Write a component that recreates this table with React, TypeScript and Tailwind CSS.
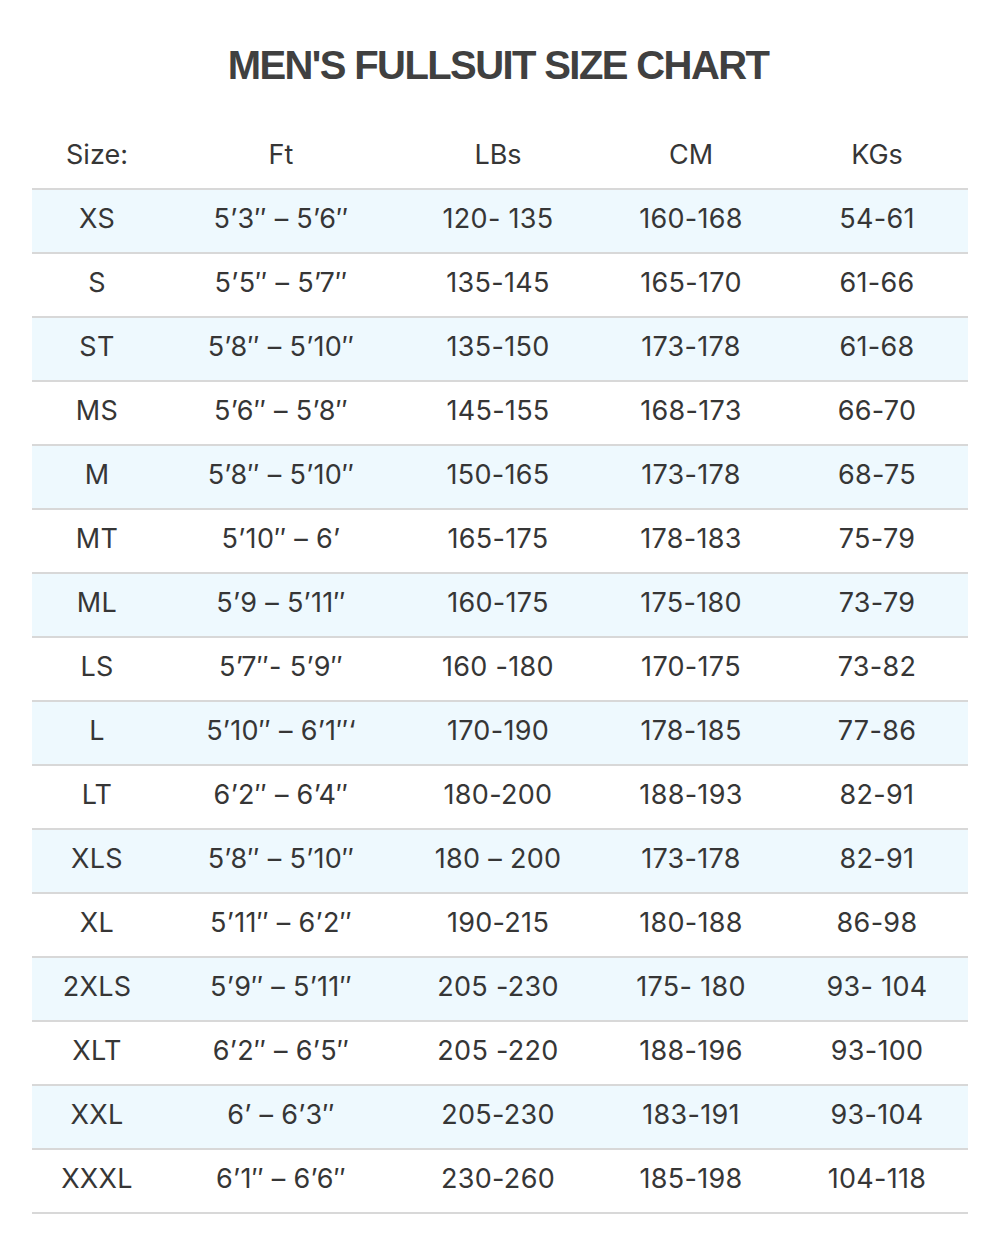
import React from "react";

type Row = [string, string, string, string, string];

const HEAD: Row = ["Size:", "Ft", "LBs", "CM", "KGs"];

const ROWS: Row[] = [
  ["XS", "5\u20193\u2033 \u2013 5\u20196\u2033", "120- 135", "160-168", "54-61"],
  ["S", "5\u20195\u2033 \u2013 5\u20197\u2033", "135-145", "165-170", "61-66"],
  ["ST", "5\u20198\u2033 \u2013 5\u201910\u2033", "135-150", "173-178", "61-68"],
  ["MS", "5\u20196\u2033 \u2013 5\u20198\u2033", "145-155", "168-173", "66-70"],
  ["M", "5\u20198\u2033 \u2013 5\u201910\u2033", "150-165", "173-178", "68-75"],
  ["MT", "5\u201910\u2033 \u2013 6\u2019", "165-175", "178-183", "75-79"],
  ["ML", "5\u20199 \u2013 5\u201911\u2033", "160-175", "175-180", "73-79"],
  ["LS", "5\u20197\u2033- 5\u20199\u2033", "160 -180", "170-175", "73-82"],
  ["L", "5\u201910\u2033 \u2013 6\u20191\u2033\u2018", "170-190", "178-185", "77-86"],
  ["LT", "6\u20192\u2033 \u2013 6\u20194\u2033", "180-200", "188-193", "82-91"],
  ["XLS", "5\u20198\u2033 \u2013 5\u201910\u2033", "180 \u2013 200", "173-178", "82-91"],
  ["XL", "5\u201911\u2033 \u2013 6\u20192\u2033", "190-215", "180-188", "86-98"],
  ["2XLS", "5\u20199\u2033 \u2013 5\u201911\u2033", "205 -230", "175- 180", "93- 104"],
  ["XLT", "6\u20192\u2033 \u2013 6\u20195\u2033", "205 -220", "188-196", "93-100"],
  ["XXL", "6\u2019 \u2013 6\u20193\u2033", "205-230", "183-191", "93-104"],
  ["XXXL", "6\u20191\u2033 \u2013 6\u20196\u2033", "230-260", "185-198", "104-118"],
];

const cols = "grid grid-cols-[130px_238px_196px_190px_182px]";

export default function App() {
  return (
    <div className="w-[996px] min-h-[1242px] bg-white font-['Inter','Liberation_Sans',sans-serif] text-[#363636]">
      {/* Title */}
      <div className="h-[130px] flex items-center justify-center">
        <h1 className="text-[40px] font-bold tracking-[-1.6px] text-[#404040] font-['Liberation_Sans',sans-serif]">
          MEN'S FULLSUIT SIZE CHART
        </h1>
      </div>

      <div className="mx-[32px] w-[936px]">
        {/* Header */}
        <div className={`${cols} h-[60px] pb-[8px] border-b-2 border-[#d8d8d8]`}>
          {HEAD.map((h) => (
            <div key={h} className="flex items-center justify-center text-[27px]">
              {h}
            </div>
          ))}
        </div>

        {/* Rows */}
        {ROWS.map((r, i) => (
          <div
            key={r[0]}
            className={`${cols} h-[64px] pb-[4px] border-b-2 border-[#d8d8d8] ${
              i % 2 === 0 ? "bg-[#eef9fe]" : "bg-white"
            }`}
          >
            {r.map((c, j) => (
              <div
                key={j}
                className="flex items-center justify-center text-[27px] tracking-[0.3px] whitespace-nowrap"
              >
                {c}
              </div>
            ))}
          </div>
        ))}
      </div>
    </div>
  );
}
